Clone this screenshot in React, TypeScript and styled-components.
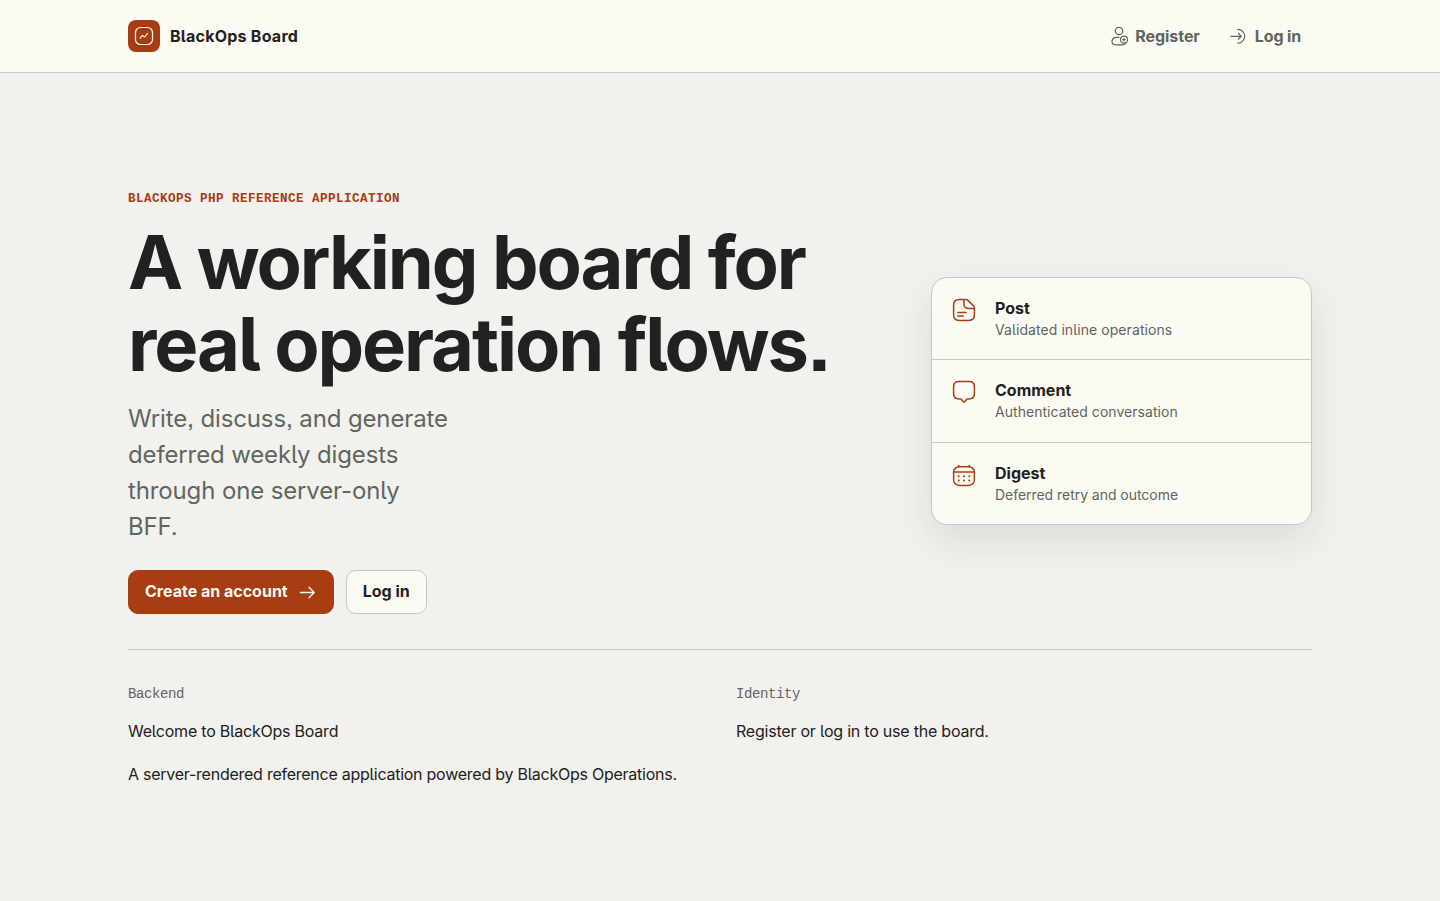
import React from "react";
import styled, { createGlobalStyle, css } from "styled-components";

const color = {
  page: "#f2f1ed",
  surface: "#fcfbf3",
  ink: "#1f2220",
  muted: "#5f665f",
  line: "#c7c8c1",
  accent: "#a83c12",
};

const mono = `"Liberation Mono", monospace`;

const GlobalStyle = createGlobalStyle`
  *, *::before, *::after { box-sizing: border-box; }
  body {
    margin: 0;
    background: ${color.page};
    color: ${color.ink};
    font: 400 16px/27px Inter, "Liberation Sans", sans-serif;
    font-feature-settings: "cv05", "ss07";
  }
  h1, h2, p { margin: 0; }
  a { color: inherit; text-decoration: none; }
`;

const Header = styled.header`
  height: 73px;
  background: ${color.surface};
  border-bottom: 1px solid ${color.line};
`;

const Bar = styled.div`
  width: 1184px;
  height: 72px;
  margin: 0 auto;
  display: flex;
  align-items: center;
  justify-content: space-between;
`;

const Brand = styled.a`
  display: flex;
  align-items: center;
  gap: 10px;
  font-weight: 700;
  letter-spacing: 0.24px;
`;

const BrandMark = styled.span`
  display: grid;
  place-items: center;
  width: 32px;
  height: 32px;
  border-radius: 8px;
  background: ${color.accent};
  color: ${color.surface};
`;

const Nav = styled.nav`
  display: flex;
  gap: 4px;
`;

const NavLink = styled.a`
  display: flex;
  align-items: center;
  gap: 7px;
  padding: 0 12px;
  color: ${color.muted};
  font-weight: 650;
  letter-spacing: -0.05px;
  &:last-child {
    padding-right: 11px;
    letter-spacing: -0.15px;
  }
`;

const Main = styled.main`
  width: 1184px;
  margin: 0 auto;
  padding-top: 116px;
`;

const Hero = styled.section`
  display: grid;
  grid-template-columns: 1fr 381px;
  align-items: center;
  padding-bottom: 35px;
  border-bottom: 1px solid ${color.line};
`;

const Eyebrow = styled.p`
  font: 700 12.6px/20px ${mono};
  letter-spacing: 0.44px;
  text-transform: uppercase;
  color: ${color.accent};
`;

const Title = styled.h1`
  margin-top: 12px;
  font-size: 74px;
  line-height: 82px;
  font-weight: 700;
  letter-spacing: -2.07px;
  white-space: nowrap;
`;

const Lead = styled.p`
  width: 324px;
  margin-top: 16px;
  font-size: 24px;
  line-height: 36px;
  letter-spacing: -0.13px;
  color: ${color.muted};
`;

const Actions = styled.div`
  display: flex;
  gap: 12px;
  margin-top: 25px;
`;

const Button = styled.a<{ $primary?: boolean }>`
  display: flex;
  align-items: center;
  gap: 9px;
  height: 44px;
  padding: 0 16px 1px;
  border: 1px solid ${color.line};
  border-radius: 10px;
  background: ${color.surface};
  font-weight: 650;
  ${(p) =>
    p.$primary &&
    css`
      border-color: ${color.accent};
      background: ${color.accent};
      color: ${color.surface};
    `}
`;

const Card = styled.div`
  margin-bottom: 1px;
  border: 1px solid ${color.line};
  border-radius: 16px;
  background: ${color.surface};
  box-shadow: 0 16px 40px rgba(31, 34, 32, 0.1);
`;

const Feature = styled.div`
  display: flex;
  gap: 19px;
  padding: 18px 20px;
  & + & {
    border-top: 1px solid ${color.line};
  }
  svg {
    margin-top: 2px;
    color: ${color.accent};
  }
`;

const FeatureName = styled.h2`
  font-size: 16px;
  line-height: 24px;
  font-weight: 700;
`;

const FeatureNote = styled.p<{ $tracking: number }>`
  padding-bottom: 1.4px;
  font-size: 14px;
  line-height: 20px;
  letter-spacing: ${(p) => p.$tracking}px;
  color: ${color.muted};
`;

const Facts = styled.section`
  display: grid;
  grid-template-columns: 1fr 1fr;
  gap: 32px;
  padding-top: 32px;
`;

const Fact = styled.div`
  display: flex;
  flex-direction: column;
  gap: 16px;
  letter-spacing: -0.22px;
`;

const FactLabel = styled.p`
  margin-bottom: -4px;
  font: 400 14px/24px ${mono};
  letter-spacing: -0.4px;
  color: ${color.muted};
`;

const FactLong = styled.p`
  letter-spacing: -0.25px;
`;

const Icon = ({ size, width, children }: { size: number; width: number; children: React.ReactNode }) => (
  <svg
    width={size}
    height={size}
    viewBox={`0 0 ${size} ${size}`}
    fill="none"
    stroke="currentColor"
    strokeWidth={width}
    strokeLinecap="round"
    strokeLinejoin="round"
  >
    {children}
  </svg>
);

const BoardIcon = () => (
  <Icon size={20} width={1.2}>
    <rect x="1.5" y="1.5" width="17" height="17" rx="5" />
    <path d="M6.2 12.2l1.7-2.3q.5-.6 1.1-.1l.9.8q.7.6 1.2-.1l2.400-3" />
  </Icon>
);

const RegisterIcon = () => (
  <Icon size={20} width={1.25}>
    <circle cx="11" cy="5" r="3.7" />
    <path d="M10.9 11.3H9.2C6 11.3 4 13.2 4 15.6 4 17.9 5.6 18.8 8 18.8h6.3c1.5 0 2.7-.4 3.3-1.3" />
    <circle cx="16" cy="13.6" r="3.6" />
    <path d="M16 12.4v2.4M14.8 13.6h2.4" />
  </Icon>
);

const LoginIcon = () => (
  <Icon size={20} width={1.25}>
    <path d="M3 10.3h10M10.4 7.4l2.8 2.9-2.8 2.9M9.8 3.3a6.9 6.9 0 0 1 0 13.8" />
  </Icon>
);

const ArrowIcon = () => (
  <Icon size={20} width={1.3}>
    <path d="M3.4 10.5h13.8M12 5.2l5.2 5.3-5.2 5.3" />
  </Icon>
);

const PostIcon = () => (
  <Icon size={24} width={1.5}>
    <path d="M12.3 1.6H7.2C3.5 1.6 1.6 3.5 1.6 7.2v9.6c0 3.7 1.9 5.6 5.6 5.6h9.6c3.7 0 5.6-1.9 5.6-5.6V10c0-.8-.3-1.5-.8-2l-5.5-5.6c-.5-.5-1.2-.8-2-.8h-2.2v4.2c0 3 1.6 4.6 4.6 4.6h5.4" />
    <path d="M5.8 14.5h8.2M5.8 17.9h5.6" />
  </Icon>
);

const CommentIcon = () => (
  <Icon size={24} width={1.5}>
    <path d="M7 1.6h10c3.6 0 5.4 1.7 5.4 5.2v7c0 3.5-1.8 5.2-5.4 5.2h-1.4c-.6 0-1 .3-1.3.7l-1.4 1.8c-.5.7-1.3.7-1.8 0l-1.4-1.8c-.3-.4-.8-.7-1.3-.7H7c-3.6 0-5.4-1.7-5.4-5.2v-7c0-3.5 1.8-5.2 5.4-5.2z" />
  </Icon>
);

const DigestIcon = () => (
  <Icon size={24} width={1.5}>
    <rect x="1.6" y="3.8" width="20.8" height="18.6" rx="5.4" />
    <path d="M6.7 2.5V4M17.3 2.5V4M1.8 8.9h20.4" />
    <path
      strokeWidth="2"
      d="M6.7 13.3h.01M12 13.3h.01M17.3 13.3h.01M6.7 17.5h.01M12 17.5h.01M17.3 17.5h.01"
    />
  </Icon>
);

const features = [
  { name: "Post", note: "Validated inline operations", icon: <PostIcon />, tracking: 0.08 },
  { name: "Comment", note: "Authenticated conversation", icon: <CommentIcon />, tracking: 0.04 },
  { name: "Digest", note: "Deferred retry and outcome", icon: <DigestIcon />, tracking: -0.04 },
];

export default function App() {
  return (
    <>
      <GlobalStyle />
      <Header>
        <Bar>
          <Brand href="#">
            <BrandMark>
              <BoardIcon />
            </BrandMark>
            BlackOps Board
          </Brand>
          <Nav>
            <NavLink href="#">
              <RegisterIcon />
              Register
            </NavLink>
            <NavLink href="#">
              <LoginIcon />
              Log in
            </NavLink>
          </Nav>
        </Bar>
      </Header>
      <Main>
        <Hero>
          <div>
            <Eyebrow>BlackOps PHP reference application</Eyebrow>
            <Title>
              A working board for
              <br />
              real operation flows.
            </Title>
            <Lead>Write, discuss, and generate deferred weekly digests through one server-only BFF.</Lead>
            <Actions>
              <Button href="#" $primary>
                Create an account
                <ArrowIcon />
              </Button>
              <Button href="#">Log in</Button>
            </Actions>
          </div>
          <Card>
            {features.map((f) => (
              <Feature key={f.name}>
                {f.icon}
                <div>
                  <FeatureName>{f.name}</FeatureName>
                  <FeatureNote $tracking={f.tracking}>{f.note}</FeatureNote>
                </div>
              </Feature>
            ))}
          </Card>
        </Hero>
        <Facts>
          <Fact>
            <FactLabel>Backend</FactLabel>
            <p>Welcome to BlackOps Board</p>
            <FactLong>A server-rendered reference application powered by BlackOps Operations.</FactLong>
          </Fact>
          <Fact>
            <FactLabel>Identity</FactLabel>
            <p>Register or log in to use the board.</p>
          </Fact>
        </Facts>
      </Main>
    </>
  );
}
